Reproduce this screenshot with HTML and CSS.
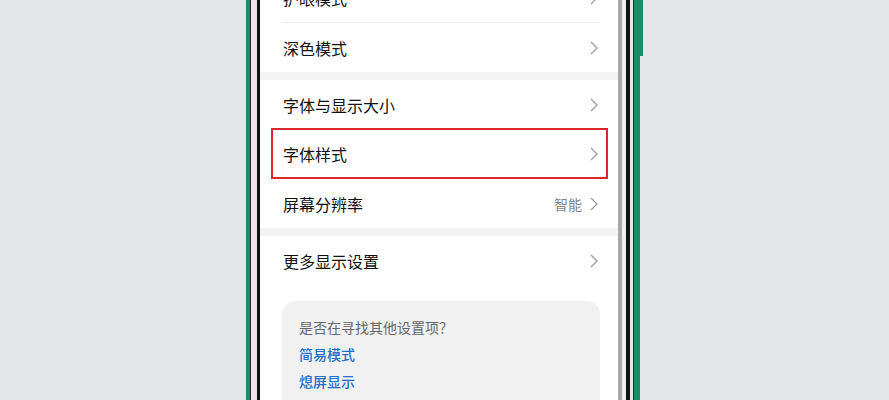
FILE: index.html
```html
<!DOCTYPE html>
<html lang="zh-CN">
<head>
    <meta charset="UTF-8">
    <meta name="viewport" content="width=device-width, initial-scale=1.0">
    <title>显示设置</title>
    <link rel="stylesheet" href="styles.css">
</head>
<body>

<div class="stage">
    <div class="frame-green">
        <div class="frame-dark">
            <div class="frame-light">
                <div class="frame-black">
                    <div class="frame-inner">
                        <div class="screen">

                            <div class="card card-top">
                                <div class="row">
                                    <span class="label">护眼模式</span>
                                    <svg class="chev" viewBox="0 0 8 14"><polyline points="1,1 7,7 1,13"/></svg>
                                </div>
                                <div class="divider"></div>
                                <div class="row">
                                    <span class="label">深色模式</span>
                                    <svg class="chev" viewBox="0 0 8 14"><polyline points="1,1 7,7 1,13"/></svg>
                                </div>
                            </div>

                            <div class="gap"></div>

                            <div class="card">
                                <div class="row">
                                    <span class="label">字体与显示大小</span>
                                    <svg class="chev" viewBox="0 0 8 14"><polyline points="1,1 7,7 1,13"/></svg>
                                </div>
                                <div class="highlight">
                                    <div class="row">
                                        <span class="label">字体样式</span>
                                        <svg class="chev" viewBox="0 0 8 14"><polyline points="1,1 7,7 1,13"/></svg>
                                    </div>
                                </div>
                                <div class="row">
                                    <span class="label">屏幕分辨率</span>
                                    <span class="right">
                                        <span class="value">智能</span>
                                        <svg class="chev" viewBox="0 0 8 14"><polyline points="1,1 7,7 1,13"/></svg>
                                    </span>
                                </div>
                            </div>

                            <div class="gap"></div>

                            <div class="card card-last">
                                <div class="row">
                                    <span class="label">更多显示设置</span>
                                    <svg class="chev" viewBox="0 0 8 14"><polyline points="1,1 7,7 1,13"/></svg>
                                </div>
                                <div class="suggest">
                                    <div class="suggest-title">是否在寻找其他设置项？</div>
                                    <div class="suggest-link">简易模式</div>
                                    <div class="suggest-link">熄屏显示</div>
                                </div>
                            </div>

                        </div>
                    </div>
                </div>
            </div>
        </div>
    </div>
</div>

</body>
</html>
```

FILE: styles.css
```css
body {
    margin: 0;
    background-color: #e5e6e8;
    font-family: "Noto Sans CJK SC", "Noto Sans", sans-serif;
    overflow: hidden;
}
.stage {
    height: 400px;
    padding-left: 246px;
    overflow: hidden;
}
/* phone frame, built from the outside in */
.frame-green {
    position: relative;
    width: 384px;
    height: 400px;
    border-left: 4px solid #1e8a68;
    border-right: 6px solid #1e8a68;
}
.frame-green::after {
    content: "";
    position: absolute;
    right: -9px;
    top: 0;
    width: 3px;
    height: 56px;
    background-color: #1e8a68;
}
.frame-dark {
    height: 100%;
    border-left: 1px solid #2b2b2b;
    border-right: 1px solid #2b2b2b;
}
.frame-light {
    height: 100%;
    border-left: 6px solid #ece4e8;
    border-right: 3px solid #ece4e8;
}
.frame-black {
    height: 100%;
    border-left: 3px solid #111;
    border-right: 4px solid #111;
}
.frame-inner {
    height: 100%;
    border-right: 4px solid #f0eff0;
}
.screen {
    height: 100%;
    background-color: #f3f3f3;
    border-right: 4px solid #a9a9a9;
    overflow: hidden;
}
.card {
    background-color: #fff;
}
.card-top {
    margin-top: -27px;
}
.card-last {
    height: 200px;
}
.gap {
    height: 8px;
}
.row {
    display: flex;
    align-items: center;
    justify-content: space-between;
    height: 49px;
    padding: 0 20px 0 23px;
}
.label {
    font-size: 16px;
    color: #111;
}
.right {
    display: flex;
    align-items: center;
    gap: 8px;
}
.value {
    font-size: 14px;
    color: #858585;
}
.chev {
    width: 8px;
    height: 14px;
    fill: none;
    stroke: #9d9d9d;
    stroke-width: 1.3;
}
.divider {
    height: 1px;
    margin: 0 18px 0 22px;
    background-color: #ececec;
}
.highlight {
    margin: -1px 10px 0 11px;
    border: 2px solid #d8262b;
}
.highlight .row {
    height: 47px;
    padding: 0 8px 0 10px;
}
.suggest {
    margin: 16px 18px 0 22px;
    padding: 13px 17px;
    height: 200px;
    background-color: #f1f1f2;
    border-radius: 14px;
}
.suggest-title {
    font-size: 14px;
    line-height: 27px;
    color: #666;
}
.suggest-link {
    font-size: 14px;
    line-height: 27px;
    font-weight: 500;
    color: #1f70c8;
}
```
